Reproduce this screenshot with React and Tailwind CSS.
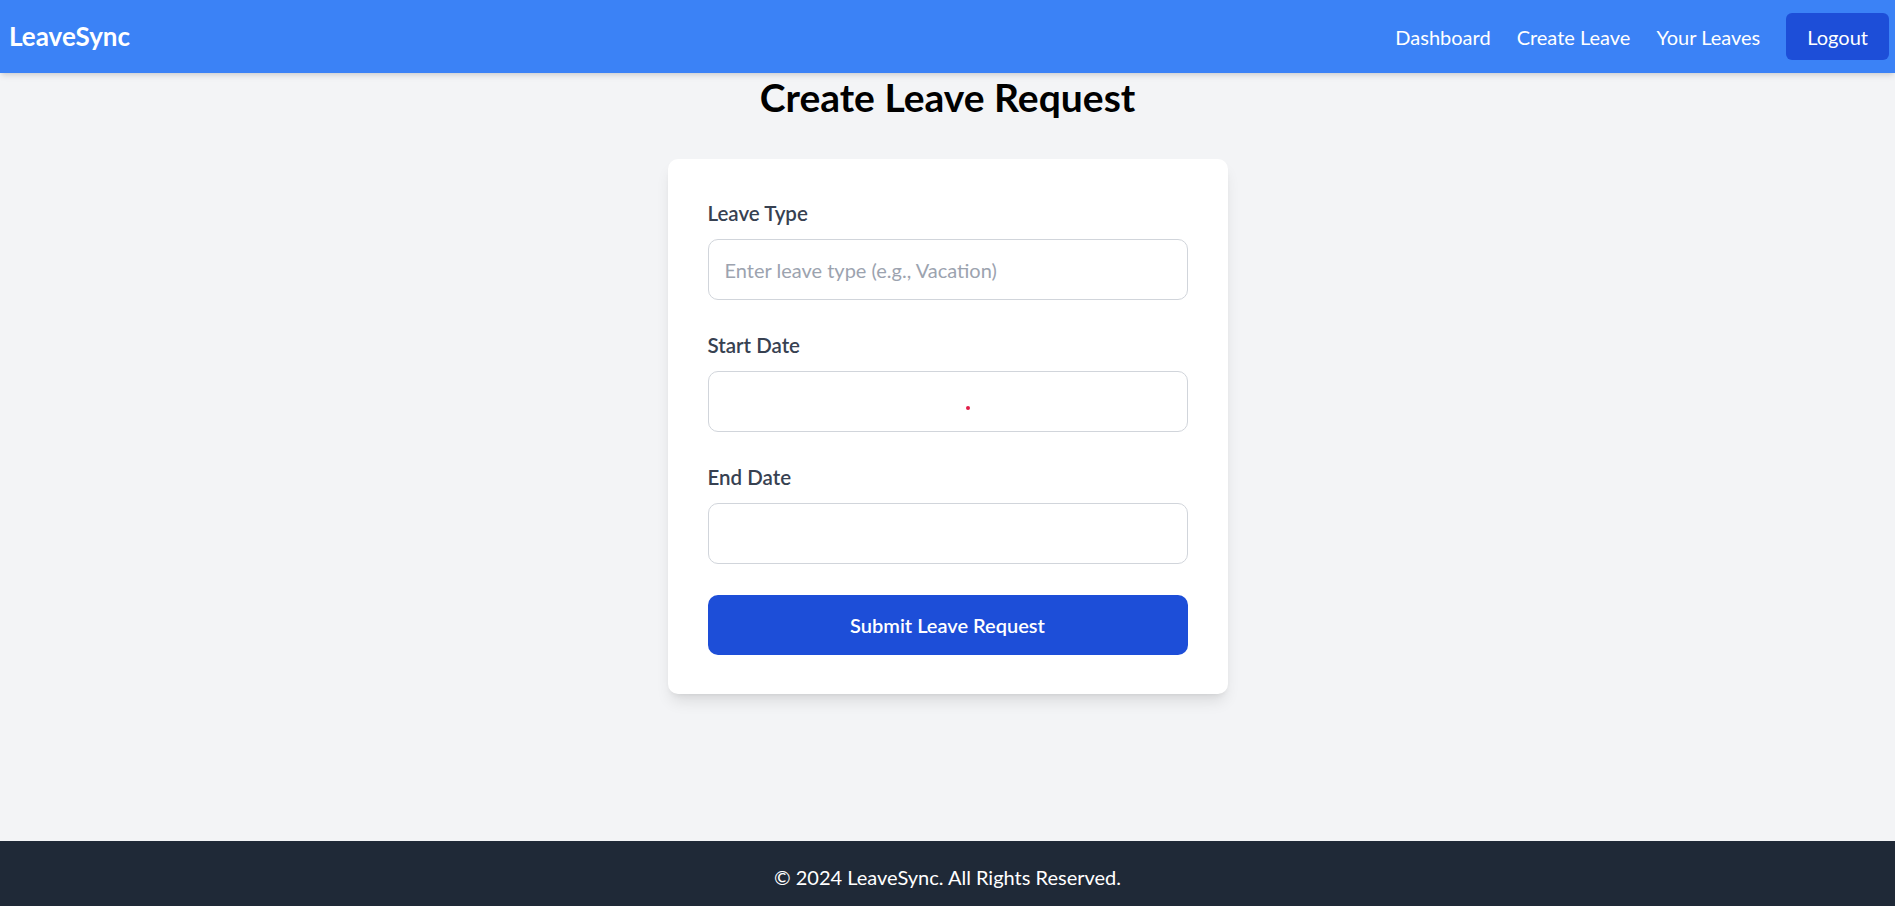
import React from "react";

function Field({ label, placeholder, dot }) {
  return (
    <div className="mb-[31px]">
      <label className="block text-[20.5px] leading-[28px] font-semibold text-[#374151] mb-[12px]">
        {label}
      </label>
      <div className="relative">
        <input
          type="text"
          placeholder={placeholder}
          className="block w-full h-[61px] border border-[#d1d5db] rounded-[10px] px-[16px] text-[20px] text-[#111827] placeholder:text-[#9ca3af] outline-none bg-white"
        />
        {dot && (
          <span className="absolute left-[258px] top-[35px] w-[4px] h-[4px] rounded-full bg-[#e11d48]" />
        )}
      </div>
    </div>
  );
}

export default function App() {
  return (
    <div className="min-h-screen flex flex-col bg-[#f3f4f6] font-[Lato,'Noto_Sans',sans-serif]">
      <nav className="relative z-10 h-[73px] shrink-0 bg-[#3b82f6] shadow-md flex items-center justify-between pl-[9px] pr-[6px]">
        <div className="text-[26px] font-bold text-white">LeaveSync</div>
        <div className="flex items-center gap-[26px] text-[20px] text-white">
          <a className="cursor-pointer">Dashboard</a>
          <a className="cursor-pointer">Create Leave</a>
          <a className="cursor-pointer">Your Leaves</a>
          <button className="h-[47px] px-[21px] rounded-[6px] bg-[#1d4ed8] text-white text-[20px]">
            Logout
          </button>
        </div>
      </nav>

      <main className="flex-1 flex flex-col items-center">
        <h1 className="text-[39px] leading-[45px] font-bold text-black mt-[2px] mb-[39px]">
          Create Leave Request
        </h1>
        <div className="w-[560px] bg-white rounded-[10px] shadow-lg px-[40px] pt-[40px] pb-[39px]">
          <Field label="Leave Type" placeholder="Enter leave type (e.g., Vacation)" />
          <Field label="Start Date" placeholder="" dot />
          <Field label="End Date" placeholder="" />
          <button className="w-full h-[60px] rounded-[10px] bg-[#1d4ed8] text-white text-[20px] font-semibold">
            Submit Leave Request
          </button>
        </div>
      </main>

      <footer className="h-[65px] shrink-0 bg-[#1f2937] text-white text-[20px] flex items-center justify-center pt-[6px]">
        © 2024 LeaveSync. All Rights Reserved.
      </footer>
    </div>
  );
}
